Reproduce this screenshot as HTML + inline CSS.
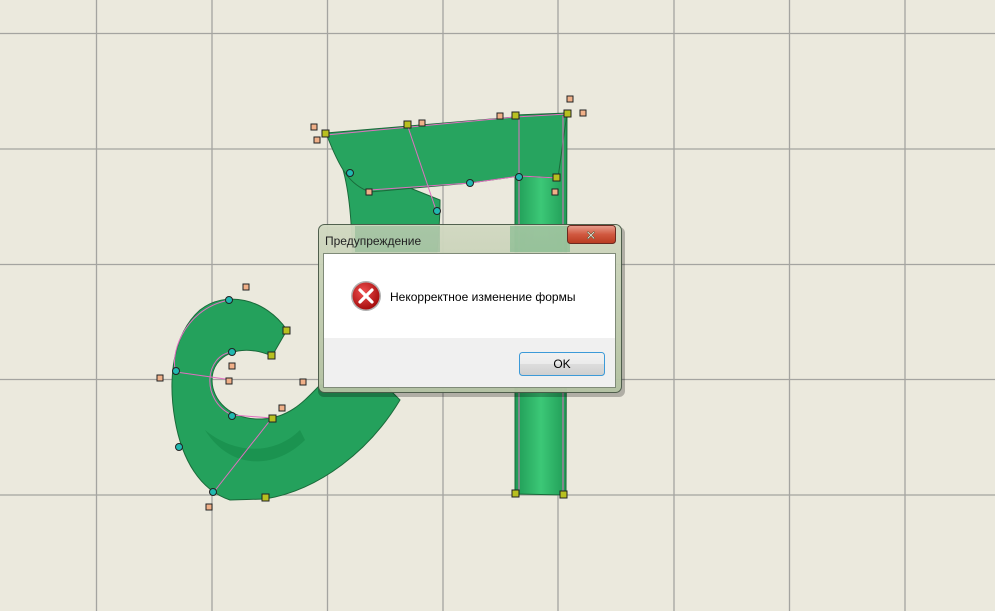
<!DOCTYPE html>
<html><head><meta charset="utf-8"><style>
html,body{margin:0;padding:0;width:995px;height:611px;overflow:hidden;background:#ebe9dd;font-family:"Liberation Sans","DejaVu Sans",sans-serif}
svg{position:absolute;left:0;top:0}
</style></head><body>
<svg width="995" height="611" viewBox="0 0 995 611">
<defs>
<linearGradient id="g1" x1="0" y1="0" x2="1" y2="0"><stop offset="0" stop-color="#1f9a55"/><stop offset=".5" stop-color="#3cc877"/><stop offset="1" stop-color="#1f9a55"/></linearGradient>
<linearGradient id="tb" x1="0" y1="0" x2="0" y2="1"><stop offset="0" stop-color="#d4dcc4"/><stop offset="1" stop-color="#b5c4a4"/></linearGradient>
<linearGradient id="ok" x1="0" y1="0" x2="0" y2="1"><stop offset="0" stop-color="#f2f2f2"/><stop offset=".5" stop-color="#ebebeb"/><stop offset=".5" stop-color="#dddddd"/><stop offset="1" stop-color="#cfcfcf"/></linearGradient>
<linearGradient id="cl" x1="0" y1="0" x2="0" y2="1"><stop offset="0" stop-color="#e8a090"/><stop offset=".5" stop-color="#d0583f"/><stop offset="1" stop-color="#b83a20"/></linearGradient>
<radialGradient id="ic" cx=".4" cy=".35" r=".7"><stop offset="0" stop-color="#f05050"/><stop offset="1" stop-color="#a00808"/></radialGradient>
</defs>
<g stroke="#a4a4a0" stroke-width="1.3">
<line x1="96.5" y1="0" x2="96.5" y2="611"/><line x1="212" y1="0" x2="212" y2="611"/><line x1="327.5" y1="0" x2="327.5" y2="611"/><line x1="443" y1="0" x2="443" y2="611"/><line x1="558" y1="0" x2="558" y2="611"/><line x1="674" y1="0" x2="674" y2="611"/><line x1="789.5" y1="0" x2="789.5" y2="611"/><line x1="905" y1="0" x2="905" y2="611"/>
<line x1="0" y1="33.5" x2="995" y2="33.5"/><line x1="0" y1="149" x2="995" y2="149"/><line x1="0" y1="264.5" x2="995" y2="264.5"/><line x1="0" y1="379.5" x2="995" y2="379.5"/><line x1="0" y1="495" x2="995" y2="495"/>
</g>
<g stroke="#1a6a3a" stroke-width="1">
<path d="M515 115 L567 113 L566 495 L515 494 Z" fill="url(#g1)"/>
<path d="M340 160 C358 210 352 300 348 390 L420 380 C430 300 440 250 440 200 Z" fill="#26a460"/>
<path d="M326 133 L515 117 L567 113 L558 178 L520 176 L470 183 L370 192 C350 185 340 170 326 133 Z" fill="#27a45f"/>
<path d="M287 330 C265 298 225 290 200 310 C172 335 168 380 175 420 C182 460 200 490 230 500 L265 499 C320 490 370 450 400 400 L385 385 L320 385 C305 400 290 418 262 419 C230 420 212 400 212 380 C212 355 240 342 272 356 Z" fill="#24a15c"/>
<path d="M205 430 C230 470 275 470 305 440 L300 430 C275 455 235 455 205 430 Z" fill="#168a48" stroke="none" opacity=".6"/>
</g>
<g stroke="#e070c0" stroke-width="1" fill="none">
<path d="M326 135 L515 117 L567 114"/><path d="M370 190 L470 183 L520 176 L558 178"/><path d="M407 124 L436 210"/><path d="M519 116 L519 495"/><path d="M563 116 L563 495"/>
<path d="M176 372 L232 380"/><path d="M232 352 C205 355 200 400 232 415 L272 418"/><path d="M213 493 L272 418"/><path d="M229 300 C180 310 170 360 176 371"/>
</g>
<g stroke="#222" stroke-width="1">
<g fill="#b8c020"><rect x="322" y="130" width="7" height="7"/><rect x="404" y="121" width="7" height="7"/><rect x="512" y="112" width="7" height="7"/><rect x="564" y="110" width="7" height="7"/><rect x="553" y="174" width="7" height="7"/><rect x="283" y="327" width="7" height="7"/><rect x="268" y="352" width="7" height="7"/><rect x="269" y="415" width="7" height="7"/><rect x="262" y="494" width="7" height="7"/><rect x="512" y="490" width="7" height="7"/><rect x="560" y="491" width="7" height="7"/></g>
<g fill="#f0b088"><rect x="311" y="124" width="6" height="6"/><rect x="314" y="137" width="6" height="6"/><rect x="419" y="120" width="6" height="6"/><rect x="497" y="113" width="6" height="6"/><rect x="567" y="96" width="6" height="6"/><rect x="580" y="110" width="6" height="6"/><rect x="552" y="189" width="6" height="6"/><rect x="366" y="189" width="6" height="6"/><rect x="243" y="284" width="6" height="6"/><rect x="157" y="375" width="6" height="6"/><rect x="226" y="378" width="6" height="6"/><rect x="229" y="363" width="6" height="6"/><rect x="300" y="379" width="6" height="6"/><rect x="279" y="405" width="6" height="6"/><rect x="206" y="504" width="6" height="6"/></g>
<g fill="#20b8b0"><circle cx="350" cy="173" r="3.5"/><circle cx="470" cy="183" r="3.5"/><circle cx="519" cy="177" r="3.5"/><circle cx="437" cy="211" r="3.5"/><circle cx="229" cy="300" r="3.5"/><circle cx="232" cy="352" r="3.5"/><circle cx="176" cy="371" r="3.5"/><circle cx="232" cy="416" r="3.5"/><circle cx="179" cy="447" r="3.5"/><circle cx="213" cy="492" r="3.5"/></g>
</g>
<rect x="316" y="224" width="307" height="170" rx="6" fill="#000" opacity=".25" transform="translate(2,3)"/>
<rect x="318.5" y="224.5" width="303" height="168" rx="6" fill="url(#tb)" stroke="#4a5a48" opacity=".95"/>
<rect x="355" y="226" width="85" height="26" fill="#5aa070" opacity=".3"/><rect x="510" y="226" width="60" height="26" fill="#3ea060" opacity=".35"/>
<rect x="567.5" y="225.5" width="48" height="18" rx="3" fill="url(#cl)" stroke="#6a2a20"/>
<text x="591" y="240" font-size="13" font-weight="bold" fill="#fff" text-anchor="middle" stroke="#553" stroke-width=".5">✕</text>
<text x="325" y="245" font-size="12" fill="#222">Предупреждение</text>
<rect x="323.5" y="253.5" width="292" height="134" fill="#f0f0f0" stroke="#7f8a78"/>
<rect x="324" y="254" width="291" height="84" fill="#fff"/>
<circle cx="366" cy="296" r="15" fill="#b0b0b0"/><circle cx="366" cy="296" r="13.5" fill="url(#ic)"/>
<path d="M360 290 L372 302 M372 290 L360 302" stroke="#fff" stroke-width="3.2" stroke-linecap="round"/>
<text x="390" y="301" font-size="12" fill="#000">Некорректное изменение формы</text>
<rect x="519.5" y="352.5" width="85" height="23" rx="3" fill="url(#ok)" stroke="#3c9ad8"/>
<text x="562" y="368" font-size="12" fill="#000" text-anchor="middle">OK</text>
</svg>
</body></html>
